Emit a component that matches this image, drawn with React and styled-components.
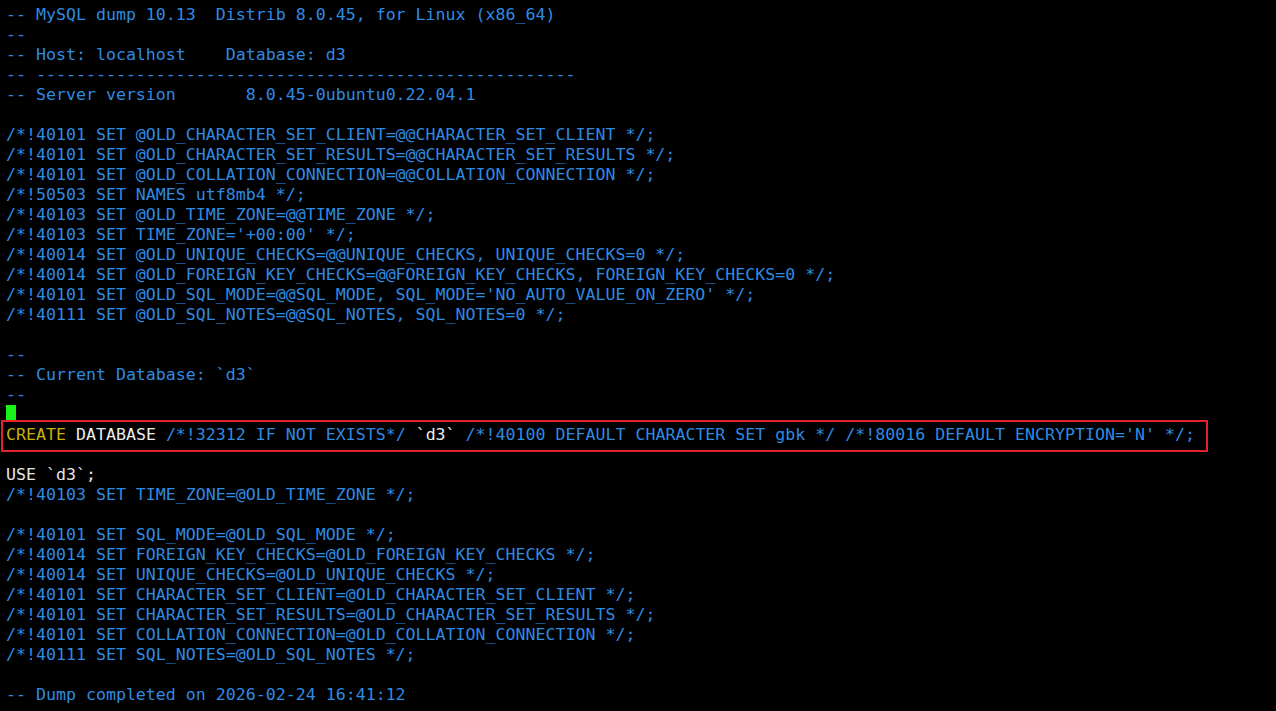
import React from 'react'
import styled, { createGlobalStyle } from 'styled-components'

const GlobalStyle = createGlobalStyle`
  html, body {
    margin: 0;
    padding: 0;
    background: #000;
  }
`

const lines = [
  '-- MySQL dump 10.13  Distrib 8.0.45, for Linux (x86_64)',
  '--',
  '-- Host: localhost    Database: d3',
  '-- ------------------------------------------------------',
  '-- Server version       8.0.45-0ubuntu0.22.04.1',
  '',
  '/*!40101 SET @OLD_CHARACTER_SET_CLIENT=@@CHARACTER_SET_CLIENT */;',
  '/*!40101 SET @OLD_CHARACTER_SET_RESULTS=@@CHARACTER_SET_RESULTS */;',
  '/*!40101 SET @OLD_COLLATION_CONNECTION=@@COLLATION_CONNECTION */;',
  '/*!50503 SET NAMES utf8mb4 */;',
  '/*!40103 SET @OLD_TIME_ZONE=@@TIME_ZONE */;',
  "/*!40103 SET TIME_ZONE='+00:00' */;",
  '/*!40014 SET @OLD_UNIQUE_CHECKS=@@UNIQUE_CHECKS, UNIQUE_CHECKS=0 */;',
  '/*!40014 SET @OLD_FOREIGN_KEY_CHECKS=@@FOREIGN_KEY_CHECKS, FOREIGN_KEY_CHECKS=0 */;',
  "/*!40101 SET @OLD_SQL_MODE=@@SQL_MODE, SQL_MODE='NO_AUTO_VALUE_ON_ZERO' */;",
  '/*!40111 SET @OLD_SQL_NOTES=@@SQL_NOTES, SQL_NOTES=0 */;',
  '',
  '--',
  '-- Current Database: `d3`',
  '--'
]

const tail = [
  '/*!40103 SET TIME_ZONE=@OLD_TIME_ZONE */;',
  '',
  '/*!40101 SET SQL_MODE=@OLD_SQL_MODE */;',
  '/*!40014 SET FOREIGN_KEY_CHECKS=@OLD_FOREIGN_KEY_CHECKS */;',
  '/*!40014 SET UNIQUE_CHECKS=@OLD_UNIQUE_CHECKS */;',
  '/*!40101 SET CHARACTER_SET_CLIENT=@OLD_CHARACTER_SET_CLIENT */;',
  '/*!40101 SET CHARACTER_SET_RESULTS=@OLD_CHARACTER_SET_RESULTS */;',
  '/*!40101 SET COLLATION_CONNECTION=@OLD_COLLATION_CONNECTION */;',
  '/*!40111 SET SQL_NOTES=@OLD_SQL_NOTES */;',
  '',
  '-- Dump completed on 2026-02-24 16:41:12'
]

function App () {
  return (
    <Terminal>
      <GlobalStyle />
      {lines.map((l, i) => <Line key={'a' + i}>{l}</Line>)}
      <Line><Cursor /></Line>
      <Line $boxed>
        <Keyword>CREATE</Keyword> <Plain>DATABASE</Plain> /*!32312 IF NOT EXISTS*/ <Plain>`d3`</Plain> /*!40100 DEFAULT CHARACTER SET gbk */ /*!80016 DEFAULT ENCRYPTION='N' */;
      </Line>
      <Line />
      <Line $color='#e6e6e6'>USE `d3`;</Line>
      {tail.map((l, i) => <Line key={'b' + i}>{l}</Line>)}
    </Terminal>
  )
}

const Terminal = styled.div`
  width: 1276px;
  height: 711px;
  box-sizing: border-box;
  padding: 5px 0 0 6px;
  background: #000;
  overflow: hidden;
  font-family: 'DejaVu Sans Mono', 'Liberation Mono', monospace;
  font-size: 16.6px;
`

const Line = styled.div`
  position: relative;
  height: 20px;
  line-height: 20px;
  white-space: pre;
  color: ${p => p.$color || '#2e8be2'};

  ${p => p.$boxed && `
    &::after {
      content: '';
      position: absolute;
      left: -5px;
      top: -5px;
      width: 1207px;
      height: 32px;
      box-sizing: border-box;
      border: 2px solid #e3222b;
      pointer-events: none;
    }
  `}
`

const Keyword = styled.span`
  color: #c9b106;
`

const Plain = styled.span`
  color: #ececec;
`

const Cursor = styled.span`
  display: inline-block;
  width: 10px;
  height: 15px;
  margin-top: 0;
  vertical-align: top;
  background: #19f219;
`

export default App
